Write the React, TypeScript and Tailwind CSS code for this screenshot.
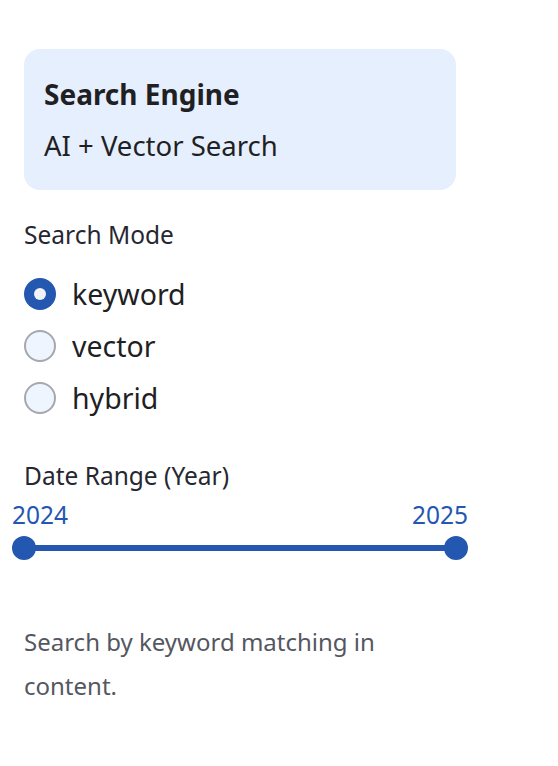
import React, { useState } from 'react'

const modes = ['keyword', 'vector', 'hybrid']

export default function App() {
  const [mode, setMode] = useState('keyword')

  return (
    <div className="min-h-[766px] bg-white text-[#262730] font-['Noto_Sans',sans-serif] px-6 pt-[49px]">
      <div className="w-[432px] h-[141px] rounded-2xl bg-[#e6effd] px-5 pt-[27px]">
        <div className="text-[28px] font-bold leading-9 text-[#1f1f24]">Search Engine</div>
        <div className="text-[27.5px] leading-9 text-[#1f1f24] mt-4">AI + Vector Search</div>
      </div>

      <div className="mt-[29px] text-[24.5px] leading-8">Search Mode</div>
      <div className="mt-[23px] flex flex-col gap-3">
        {modes.map((m) => (
          <label key={m} className="flex items-center gap-4 h-10 cursor-pointer" onClick={() => setMode(m)}>
            {mode === m ? (
              <span className="w-8 h-8 rounded-full bg-[#2457b0] flex items-center justify-center">
                <span className="w-3 h-3 rounded-full bg-[#f0f2f6]" />
              </span>
            ) : (
              <span className="w-8 h-8 rounded-full border-2 border-[#a6a8ad] bg-[#eef5ff]" />
            )}
            <span className="text-[28.5px] leading-10 text-[#1f1f24]">{m}</span>
          </label>
        ))}
      </div>

      <div className="mt-[42px] text-[24.5px] leading-8">Date Range (Year)</div>
      <div className="w-[456px] -ml-3 mt-[9px]">
        <div className="flex justify-between text-[24.5px] leading-7 text-[#2457b0]">
          <span>2024</span>
          <span>2025</span>
        </div>
        <div className="relative h-6 mt-[7px] mx-3">
          <div className="absolute left-0 right-0 top-[9px] h-[6px] bg-[#2457b0]" />
          <div className="absolute -left-3 top-0 w-6 h-6 rounded-full bg-[#2457b0]" />
          <div className="absolute -right-3 top-0 w-6 h-6 rounded-full bg-[#2457b0]" />
        </div>
      </div>

      <p className="mt-[60px] w-[400px] text-[24px] leading-[44px] text-[#55575f]">
        Search by keyword matching in content.
      </p>
    </div>
  )
}
